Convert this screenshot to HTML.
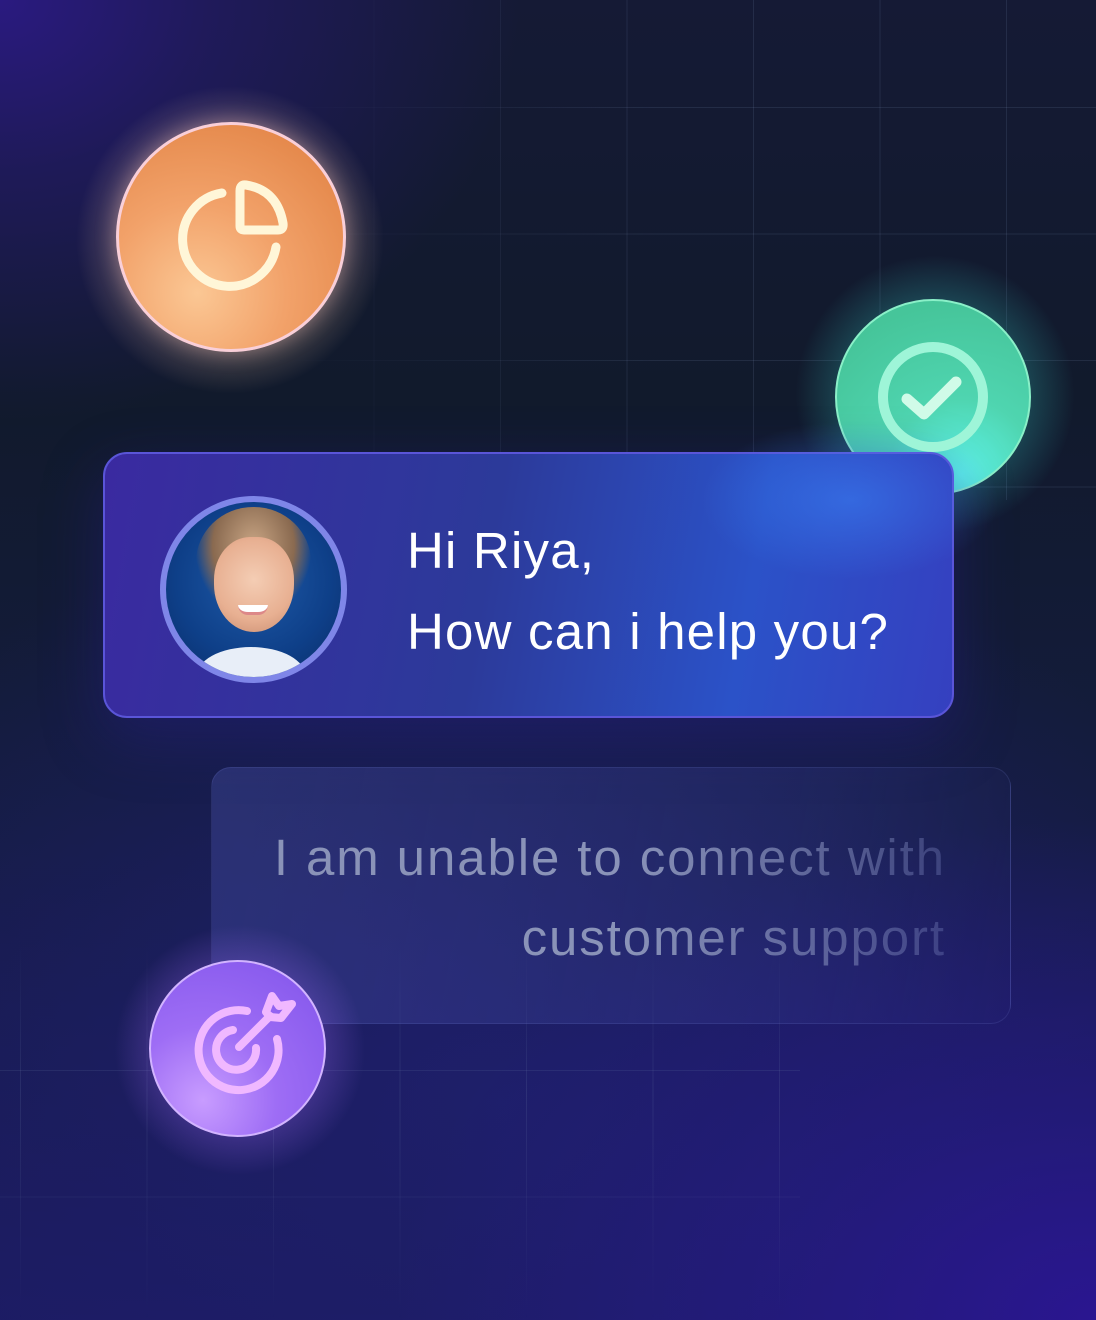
<!DOCTYPE html><html><head><style>
*{margin:0;padding:0;box-sizing:border-box}
body{width:1096px;height:1320px;overflow:hidden;position:relative;font-family:"Liberation Sans",sans-serif;
background:#111a2c;}
.bg{position:absolute;inset:0;background:
radial-gradient(ellipse 520px 420px at 0px 0px,#2a1a80 0%,rgba(42,26,128,.5) 40%,rgba(0,0,0,0) 100%),
radial-gradient(ellipse 700px 500px at 1096px 1320px,#2a1690 0%,rgba(40,25,140,.6) 40%,rgba(0,0,0,0) 100%),
radial-gradient(ellipse 800px 600px at 500px 1100px,#1e1f6a 0%,rgba(30,31,106,.5) 50%,rgba(0,0,0,0) 100%),
linear-gradient(180deg,#151a35 0%,#111a2c 30%,#141c3e 60%,#1c1a62 100%);}
.grid{position:absolute;background-image:linear-gradient(rgba(120,140,180,.16) 1px,transparent 1px),linear-gradient(90deg,rgba(120,140,180,.16) 1px,transparent 1px);background-size:126.5px 126.5px}
.circ{position:absolute;border-radius:50%}
</style></head><body>
<div class="bg"></div>
<div class="grid" style="left:0;top:0;width:1096px;height:500px;background-position:-6px 107px;-webkit-mask-image:linear-gradient(90deg,transparent 25%,#000 60%);mask-image:linear-gradient(90deg,transparent 25%,#000 60%)"></div>
<div class="grid" style="left:0;top:940px;width:800px;height:380px;background-position:20px 130px;-webkit-mask-image:linear-gradient(180deg,transparent,#000 40%,transparent);mask-image:linear-gradient(180deg,transparent,#000 40%,transparent)"></div>

<!-- orange -->
<div class="circ" style="left:70px;top:80px;width:320px;height:320px;background:radial-gradient(circle,rgba(255,210,170,.45) 30%,rgba(255,200,170,0) 68%)"></div>
<div class="circ" style="left:116px;top:122px;width:230px;height:230px;background:radial-gradient(circle at 35% 75%,#fbc794 0%,#f2a26a 40%,#e5894c 80%);border:3px solid #f9cfd8;box-shadow:0 0 20px rgba(255,200,190,.4)"></div>

<!-- green -->
<div class="circ" style="left:790px;top:250px;width:290px;height:290px;background:radial-gradient(circle,rgba(60,230,220,.35) 30%,rgba(60,230,220,0) 68%)"></div>
<div class="circ" style="left:835px;top:299px;width:196px;height:196px;background:radial-gradient(circle at 65% 90%,#5ef4e8 0%,#4fd5b0 35%,#46c59a 80%);border:2px solid #8af0c8"></div>

<!-- chat card -->
<div style="position:absolute;left:103px;top:452px;width:851px;height:266px;border-radius:24px;border:2px solid #5a55d8;background:linear-gradient(100deg,#3a2aa0 0%,#2c3a9a 45%,#2b52c8 75%,#3540c0 100%);box-shadow:0 20px 60px rgba(40,30,140,.4)"></div>
<div style="position:absolute;left:700px;top:420px;width:300px;height:160px;background:radial-gradient(ellipse,rgba(60,140,255,.45),rgba(60,140,255,0) 70%)"></div>
<div class="circ" style="left:160px;top:496px;width:187px;height:187px;background:#7f86e8;padding:6px">
<div style="width:100%;height:100%;border-radius:50%;background:radial-gradient(circle at 50% 45%,#1e5aa8 0%,#0e3f88 60%,#0a2c66 100%);overflow:hidden;position:relative">
<div style="position:absolute;left:30px;top:5px;width:115px;height:110px;border-radius:50% 50% 40% 40%;background:radial-gradient(ellipse at 50% 35%,#c8a584 0%,#8a6a50 50%,rgba(40,40,60,0) 72%)"></div>
<div style="position:absolute;left:48px;top:35px;width:80px;height:95px;border-radius:45% 45% 50% 50%;background:radial-gradient(circle at 50% 45%,#f4cdb4 0%,#e8b092 60%,#c88c70 100%)"></div>
<div style="position:absolute;left:72px;top:103px;width:30px;height:10px;border-radius:0 0 15px 15px;background:#fff;border-bottom:3px solid #d88"></div>
<div style="position:absolute;left:30px;top:145px;width:110px;height:60px;border-radius:50%;background:#e8eef8"></div>
</div></div>
<div style="position:absolute;left:407px;top:510px;color:#fff;font-size:51px;letter-spacing:1.2px;line-height:81px;">Hi Riya,<br>How can i help you?</div>

<!-- ghost card -->
<div style="position:absolute;left:211px;top:767px;width:800px;height:257px;border-radius:20px;background:linear-gradient(100deg,rgba(90,100,200,.28),rgba(70,80,170,.18) 70%,rgba(60,60,150,.05));border:1px solid rgba(130,140,220,.15)"></div>
<div style="position:absolute;left:150px;top:818px;width:796px;text-align:right;font-size:51px;letter-spacing:1.9px;line-height:80px;color:transparent;background:linear-gradient(90deg,#8a93b8 0%,#8a93b8 60%,rgba(120,130,190,.35) 100%);-webkit-background-clip:text;background-clip:text">I am unable to connect with<br>customer support</div>

<!-- purple -->
<div class="circ" style="left:110px;top:920px;width:260px;height:260px;background:radial-gradient(circle,rgba(170,110,255,.4) 30%,rgba(170,110,255,0) 68%)"></div>
<div class="circ" style="left:149px;top:960px;width:177px;height:177px;background:radial-gradient(circle at 30% 80%,#c89cff 0%,#9e6df5 40%,#8a5cee 80%);border:2px solid #d2b4ff"></div>

<svg style="position:absolute;left:0;top:0" width="1096" height="1320" viewBox="0 0 1096 1320">
<g fill="none" stroke="#fff6d8" stroke-width="9" stroke-linecap="round" stroke-linejoin="round">
<path d="M222 193 A47 47 0 1 0 276 247"/>
<path d="M240 191 L240 226 Q240 230 244 230 L278 230 Q284 230 283 223 Q277 190 246 185 Q240 184 240 191 Z"/>
</g>
<circle cx="933" cy="397" r="50" fill="none" stroke="#9ef5d8" stroke-width="10"/>
<path d="M907 399 L924 414 L956 382" fill="none" stroke="#d0fbe8" stroke-width="11" stroke-linecap="round" stroke-linejoin="round"/>
<g fill="none" stroke="#f0b8ff" stroke-width="8" stroke-linecap="round" stroke-linejoin="round">
<path d="M247 1011 A40 40 0 1 0 277 1039"/>
<path d="M233 1030 A20 20 0 1 0 256 1048"/>
<path d="M239 1047 L270 1016"/>
<path d="M266 1012 L272 996 L279 1006 L292 1004 L281 1018 L270 1017 Z"/>
</g>
</svg>
</body></html>
